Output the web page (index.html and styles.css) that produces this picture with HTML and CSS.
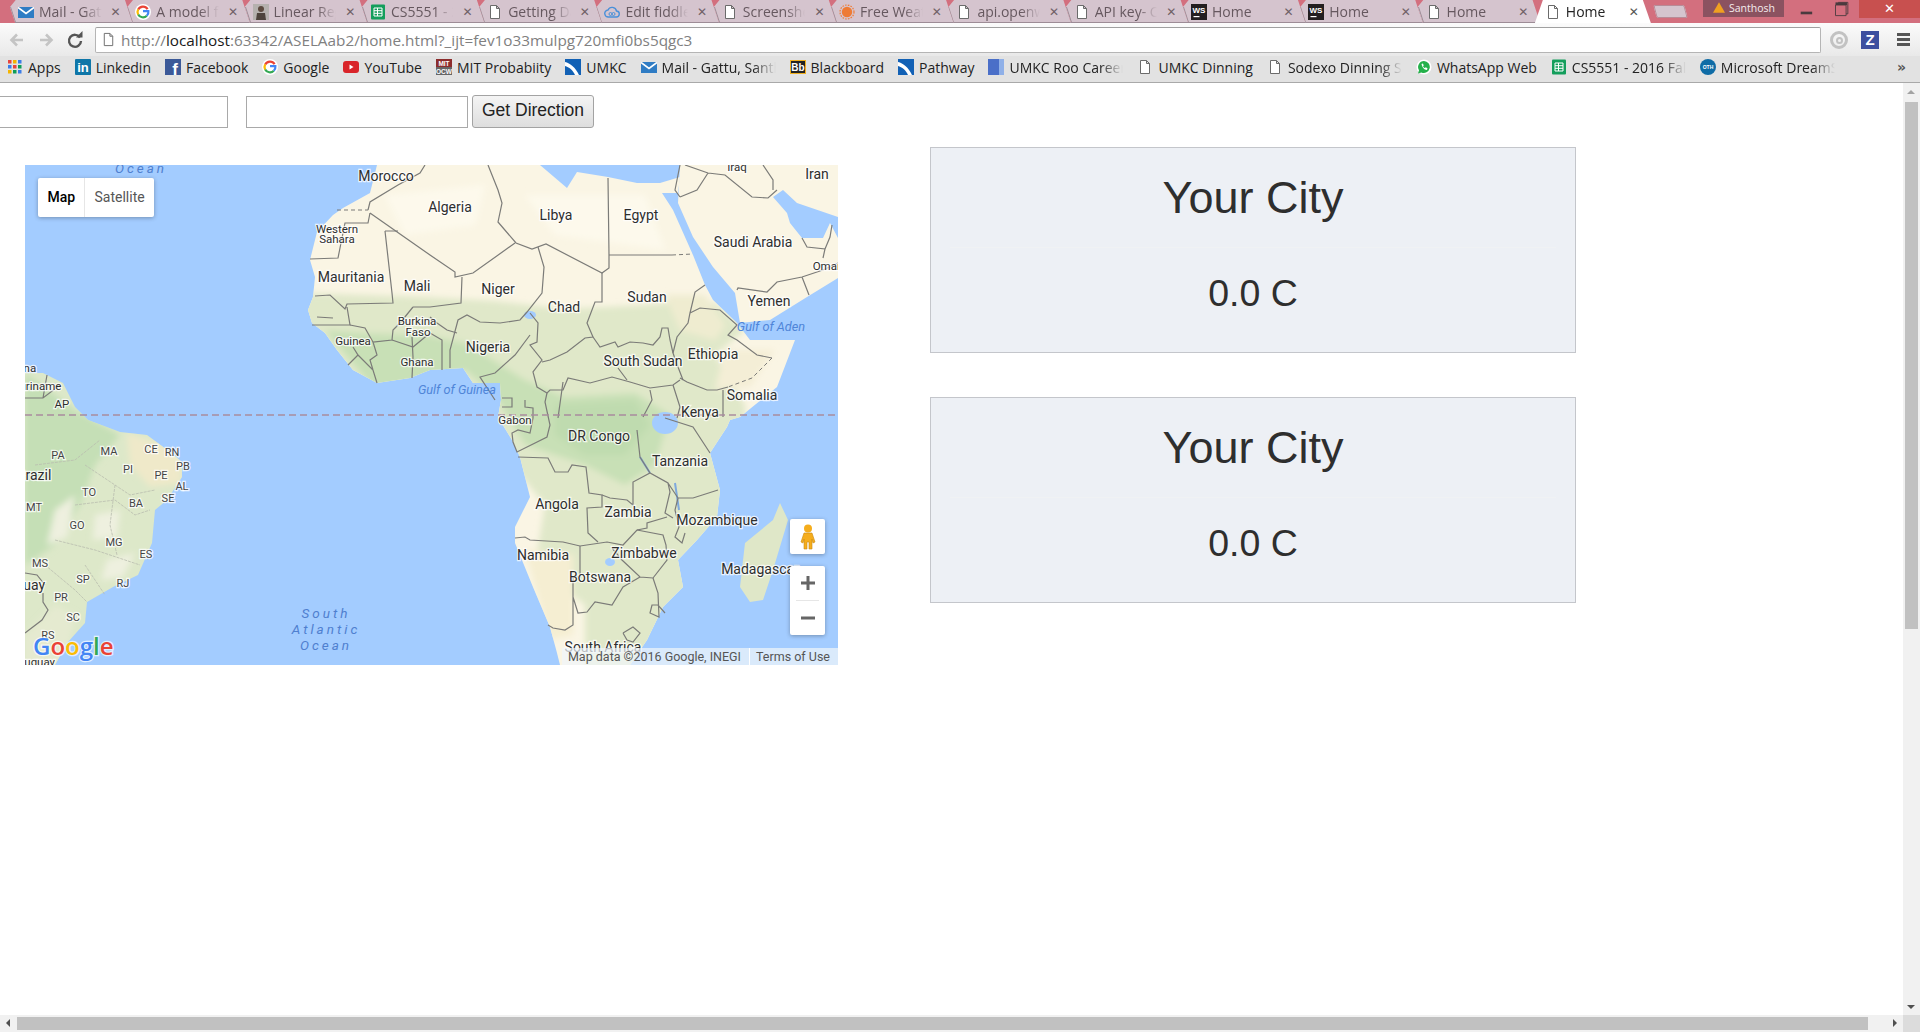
FILE: index.html

```html
<!DOCTYPE html>
<html lang="en">
<head>
    <meta charset="UTF-8">
    <title>Home</title>
    <link rel="stylesheet" href="styles.css">
</head>
<body>
    <svg class="icon-defs" width="0" height="0">
        <symbol id="doc" viewBox="0 0 16 16"><path d="M3.500 1.500h6l3 3v10h-9z M9.500 1.500v3h3" fill="#fff" stroke="#6b6b6b" stroke-width="1"/></symbol>
        <symbol id="mail" viewBox="0 0 16 16"><rect y="3" width="16" height="11" fill="#2f7cc4"/><path d="M0 3.500l8 6 8-6" fill="none" stroke="#fff" stroke-width="1.600"/></symbol>
        <symbol id="sheet" viewBox="0 0 16 16"><rect x="1" y="0.500" width="14" height="15" rx="1" fill="#149e5c"/><path d="M4 4h8v8H4z M4 6.700h8 M4 9.300h8 M7.500 4v8" fill="none" stroke="#fff" stroke-width="1"/></symbol>
        <symbol id="goog" viewBox="0 0 16 16"><circle cx="8" cy="8" r="8" fill="#fff"/><path d="M12.600 5.200A5.400 5.400 0 0 0 3.200 5.600" fill="none" stroke="#ea4335" stroke-width="2.200"/><path d="M3.200 5.400a5.400 5.400 0 0 0 0 5.200" fill="none" stroke="#fbbc05" stroke-width="2.200"/><path d="M3.200 10.400a5.400 5.400 0 0 0 8.600 1.400" fill="none" stroke="#34a853" stroke-width="2.200"/><path d="M8 7.200h5.400a5.400 5.400 0 0 1-1.600 4.600" fill="none" stroke="#4285f4" stroke-width="2.200"/></symbol>
        <symbol id="umkc" viewBox="0 0 16 16"><rect width="16" height="16" fill="#1261b5"/><path d="M0 3c5 1 11 6 14 13h-4C8 11 4 8 0 7z" fill="#fff"/></symbol>
        <symbol id="wstorm" viewBox="0 0 16 16"><rect width="16" height="16" fill="#231f20"/><text x="8" y="9" class="ws-text">WS</text><rect x="2.500" y="12" width="6" height="1.200" fill="#fff"/></symbol>
    </svg>

    <div class="browser">
        <div class="tabstrip">
            <div class="tab"><svg class="favicon"><use href="#mail"/></svg><span class="tab-title">Mail - Gattu</span><span class="tab-x">&#10005;</span></div>
            <div class="tab"><svg class="favicon"><use href="#goog"/></svg><span class="tab-title">A model for</span><span class="tab-x">&#10005;</span></div>
            <div class="tab">
                <svg class="favicon" viewBox="0 0 16 16"><rect width="16" height="16" fill="#b5b1ae"/><circle cx="8" cy="5" r="3" fill="#5c4a3f"/><path d="M3 16l1-7h8l1 7z" fill="#4d433c"/></svg>
                <span class="tab-title">Linear Regr</span><span class="tab-x">&#10005;</span>
            </div>
            <div class="tab"><svg class="favicon"><use href="#sheet"/></svg><span class="tab-title">CS5551 - 2016</span><span class="tab-x">&#10005;</span></div>
            <div class="tab"><svg class="favicon"><use href="#doc"/></svg><span class="tab-title">Getting Data</span><span class="tab-x">&#10005;</span></div>
            <div class="tab">
                <svg class="favicon" viewBox="0 0 16 16"><path d="M4.500 13a3.500 3.500 0 0 1-.5-7 4.500 4.500 0 0 1 8.500 1 3 3 0 0 1-.5 6z" fill="none" stroke="#4a90d9" stroke-width="1.400"/><circle cx="6.500" cy="10" r="1.500" fill="none" stroke="#4a90d9"/><circle cx="9.500" cy="10" r="1.500" fill="none" stroke="#4a90d9"/></svg>
                <span class="tab-title">Edit fiddle -</span><span class="tab-x">&#10005;</span>
            </div>
            <div class="tab"><svg class="favicon"><use href="#doc"/></svg><span class="tab-title">Screenshot</span><span class="tab-x">&#10005;</span></div>
            <div class="tab">
                <svg class="favicon" viewBox="0 0 16 16"><circle cx="8" cy="8" r="5.200" fill="#ee7b35"/><circle cx="8" cy="8" r="7" fill="none" stroke="#ee7b35" stroke-width="1.200" stroke-dasharray="1.600 1.200"/></svg>
                <span class="tab-title">Free Weather</span><span class="tab-x">&#10005;</span>
            </div>
            <div class="tab"><svg class="favicon"><use href="#doc"/></svg><span class="tab-title">api.openweather</span><span class="tab-x">&#10005;</span></div>
            <div class="tab"><svg class="favicon"><use href="#doc"/></svg><span class="tab-title">API key- Open</span><span class="tab-x">&#10005;</span></div>
            <div class="tab"><svg class="favicon"><use href="#wstorm"/></svg><span class="tab-title">Home</span><span class="tab-x">&#10005;</span></div>
            <div class="tab"><svg class="favicon"><use href="#wstorm"/></svg><span class="tab-title">Home</span><span class="tab-x">&#10005;</span></div>
            <div class="tab"><svg class="favicon"><use href="#doc"/></svg><span class="tab-title">Home</span><span class="tab-x">&#10005;</span></div>
            <div class="tab tab-active"><svg class="favicon"><use href="#doc"/></svg><span class="tab-title">Home</span><span class="tab-x">&#10005;</span></div>
            <div class="new-tab"></div>
            <div class="strip-space"></div>
            <div class="profile">
                <svg class="warn" viewBox="0 0 14 12"><path d="M7 0l7 12H0z" fill="#f0a020"/></svg>
                <span>Santhosh</span>
            </div>
            <div class="win-btn">
                <svg viewBox="0 0 34 18" width="34" height="18"><rect x="11" y="12" width="13" height="3" fill="#4a3a3e"/></svg>
            </div>
            <div class="win-btn">
                <svg viewBox="0 0 34 18" width="34" height="18"><path d="M8.500 1.500h13v3h-13z" fill="#4a3a3e"/><path d="M11.500 1.500h11v13h-2M8.500 4.500h12v12h-12z" fill="none" stroke="#4a3a3e"/></svg>
            </div>
            <div class="win-close">&#10005;</div>
        </div>

        <div class="toolbar">
            <svg class="nav-icon" viewBox="0 0 18 18"><path d="M15 9H4M9 3.500L3.500 9 9 14.500" fill="none" stroke="#c4c4c4" stroke-width="2.600"/></svg>
            <svg class="nav-icon" viewBox="0 0 18 18"><path d="M3 9h11M9 3.500L14.500 9 9 14.500" fill="none" stroke="#c4c4c4" stroke-width="2.600"/></svg>
            <svg class="nav-icon" viewBox="0 0 18 18"><path d="M14 6.500A6 6 0 1 0 15 10" fill="none" stroke="#555" stroke-width="2.400"/><path d="M10 6.500h6.500V0z" fill="#555"/></svg>
            <div class="urlbar">
                <svg class="url-page"><use href="#doc"/></svg>
                <span class="url-text">http://<b>localhost</b>:63342/ASELAab2/home.html?_ijt=fev1o33mulpg720mfi0bs5qgc3</span>
            </div>
            <svg class="ext-icon" viewBox="0 0 20 20"><circle cx="10" cy="10" r="7.500" fill="none" stroke="#c2c2c2" stroke-width="3"/><circle cx="10.500" cy="10.500" r="2.500" fill="none" stroke="#c2c2c2" stroke-width="2"/></svg>
            <div class="ext-z">Z</div>
            <div class="menu-icon"><i></i><i></i><i></i></div>
        </div>

        <div class="bookmarks">
            <div class="bm">
                <svg class="bm-icon" viewBox="0 0 16 16"><rect x="1" y="1" width="3.500" height="3.500" fill="#e8453c"/><rect x="6" y="1" width="3.500" height="3.500" fill="#f4b400"/><rect x="11" y="1" width="3.500" height="3.500" fill="#3a7de8"/><rect x="1" y="6" width="3.500" height="3.500" fill="#3a7de8"/><rect x="6" y="6" width="3.500" height="3.500" fill="#e8453c"/><rect x="11" y="6" width="3.500" height="3.500" fill="#0f9d58"/><rect x="1" y="11" width="3.500" height="3.500" fill="#f4b400"/><rect x="6" y="11" width="3.500" height="3.500" fill="#0f9d58"/><rect x="11" y="11" width="3.500" height="3.500" fill="#3a7de8"/></svg>
                <span>Apps</span>
            </div>
            <div class="bm"><svg class="bm-icon" viewBox="0 0 16 16"><rect width="16" height="16" rx="1" fill="#0e76a8"/><text x="8" y="13" class="in-text">in</text></svg><span>Linkedin</span></div>
            <div class="bm"><svg class="bm-icon" viewBox="0 0 16 16"><rect width="16" height="16" fill="#3b5998"/><text x="10" y="15.500" class="fb-text">f</text></svg><span>Facebook</span></div>
            <div class="bm"><svg class="bm-icon"><use href="#goog"/></svg><span>Google</span></div>
            <div class="bm"><svg class="bm-icon" viewBox="0 0 16 16"><rect y="2" width="16" height="12" rx="3" fill="#d9252a"/><path d="M6.500 5.500v5l4-2.500z" fill="#fff"/></svg><span>YouTube</span></div>
            <div class="bm"><svg class="bm-icon" viewBox="0 0 16 16"><rect width="16" height="8" fill="#8c2d2d"/><rect y="8" width="16" height="8" fill="#666"/><text x="8" y="6.500" class="mit-text">MIT</text><text x="8" y="14.500" class="mit-text">OCW</text></svg><span>MIT Probabiity</span></div>
            <div class="bm"><svg class="bm-icon"><use href="#umkc"/></svg><span>UMKC</span></div>
            <div class="bm"><svg class="bm-icon"><use href="#mail"/></svg><span class="bm-fade">Mail - Gattu, Santhosh</span></div>
            <div class="bm"><svg class="bm-icon" viewBox="0 0 16 16"><rect width="16" height="14" y="1" fill="#f0b020"/><rect x="1" y="2" width="14" height="12" fill="#222"/><text x="8" y="12" class="bb-text">Bb</text></svg><span>Blackboard</span></div>
            <div class="bm"><svg class="bm-icon"><use href="#umkc"/></svg><span>Pathway</span></div>
            <div class="bm"><svg class="bm-icon" viewBox="0 0 16 16"><rect width="16" height="16" fill="#4a6fc8"/><rect x="11" width="5" height="16" fill="#8fb0e8"/></svg><span class="bm-fade">UMKC Roo Careers</span></div>
            <div class="bm"><svg class="bm-icon"><use href="#doc"/></svg><span>UMKC Dinning</span></div>
            <div class="bm"><svg class="bm-icon"><use href="#doc"/></svg><span class="bm-fade">Sodexo Dinning Services</span></div>
            <div class="bm"><svg class="bm-icon" viewBox="0 0 16 16"><circle cx="8" cy="8" r="7.500" fill="#fff"/><path d="M8 2a6 6 0 0 0-5 9.200L2 14.500l3.400-1A6 6 0 1 0 8 2z" fill="#25b14b"/><path d="M5.500 5c1 4 2.500 5.500 5.500 6l.5-1.700-1.800-1-.7.800C7.800 8.600 7.300 8 7 7l.8-.6-.9-1.800z" fill="#fff"/></svg><span>WhatsApp Web</span></div>
            <div class="bm"><svg class="bm-icon"><use href="#sheet"/></svg><span class="bm-fade">CS5551 - 2016 Fall</span></div>
            <div class="bm"><svg class="bm-icon" viewBox="0 0 16 16"><circle cx="8" cy="8" r="8" fill="#0f6ca6"/><text x="8" y="10" class="dm-text">OTH</text></svg><span class="bm-fade">Microsoft DreamSpark</span></div>
            <div class="bm-more">&raquo;</div>
        </div>

        <div class="viewport">
            <main class="page">
                <div class="route-form">
                    <input type="text" class="route-start">
                    <input type="text" class="route-end">
                    <button type="button">Get Direction</button>
                </div>

                <div class="content">
                    <div class="map">
                        <svg class="map-svg" viewBox="0 0 813 500" width="813" height="500">
                            <defs>
                                <clipPath id="africaClip"><path id="africaShape" d="M352 0L345 28L318 43L308 50L292 67L285 95L290 112L288 132L283 145L287 158L300 168L312 185L328 205L352 218L385 213L405 205L438 203L448 218L475 218L476 235L473 252L487 275L495 292L505 332L490 362L490 378L508 422L525 462L532 488L535 500L605 500L622 475L638 442L658 422L653 395L672 375L692 352L695 325L685 288L702 262L705 255L715 252L752 222L770 175L725 175L712 158L688 135L680 120L668 90L648 45L637 28L653 28L655 12L635 18L612 18L583 12L552 7L542 23L515 0Z"/></clipPath>
                                <clipPath id="brazilClip"><path d="M0 208L18 208L38 218L50 242L63 255L95 267L122 270L145 287L157 297L157 312L142 335L130 345L127 378L113 410L88 422L62 437L60 458L42 478L30 500L0 500Z"/></clipPath>
                                <filter id="soft"><feGaussianBlur stdDeviation="3"/></filter>
                            </defs>
                            <rect width="813" height="500" fill="#a3ccff"/>

                            <use href="#africaShape" fill="#faf5e4"/>
                            <path d="M655 0L813 0L813 113L782 132L745 155L715 158L710 128L688 102L668 72L653 38Z" fill="#faf5e4"/>
                            <path d="M748 32L758 25L772 38L813 52L813 73L805 58L798 73L777 73L765 58L762 48Z" fill="#a3ccff"/>

                            <g clip-path="url(#africaClip)">
                                <g filter="url(#soft)">
                                    <path d="M270 128L340 130L400 132L470 136L540 144L620 140L660 136L690 138L720 165L690 190L720 240L720 300L720 510L560 510L560 440L510 400L520 340L470 280L460 225L270 225Z" fill="#e0e8c9"/>
                                    <path d="M300 165L340 168L400 170L440 178L460 190L500 215L540 232L610 228L645 250L630 300L600 320L560 300L500 280L470 230L440 205L350 225Z" fill="#c8e0b6"/>
                                    <path d="M530 240L610 235L625 260L600 290L560 290L530 270Z" fill="#bfdbaf"/>
                                    <path d="M500 385L548 390L548 470L525 475Z" fill="#f5eed2"/>
                                    <path d="M640 130L680 130L700 160L690 175L655 165Z" fill="#efecd0"/>
                                    <path d="M700 185L750 185L725 222L690 225Z" fill="#f4eed6"/>
                                    <path d="M360 30L460 20L450 60L380 70Z M500 30L620 30L640 85L530 70Z" fill="#fdf9ec"/>
                                </g>
                            </g>

                            <g clip-path="url(#brazilClip)">
                                <rect y="200" width="170" height="300" fill="#dde8c9"/>
                                <g filter="url(#soft)">
                                    <path d="M0 208L50 245L95 270L70 300L55 340L30 380L0 400Z" fill="#c5dfb6"/>
                                    <path d="M102 268L155 285L157 318L125 322L105 300Z" fill="#efe9c9"/>
                                    <path d="M0 470L30 440L50 450L40 500L0 500Z" fill="#e5ead0"/>
                                    <path d="M30 345L50 330L42 372L22 380Z M70 350L95 345L92 372L68 375Z M82 395L110 388L98 412L76 415Z" fill="#eef0df"/>
                                </g>
                            </g>
                            <path d="M755 338L763 355L748 405L738 435L725 437L715 422L720 378L748 355Z" fill="#dfe7c8"/>

                            <ellipse cx="640" cy="258" rx="13" ry="11" fill="#a3ccff"/>
                            <ellipse cx="505" cy="150" rx="6" ry="4" fill="#a3ccff"/>
                            <ellipse cx="585" cy="397" rx="5" ry="4" fill="#a3ccff"/>
                            <path class="lake" d="M615 292L625 308M650 318L654 345"/>

                            <g class="borders">
                                <path d="M463 0L473 25L477 38L473 57L491 78L507 84L521 79L577 108L584 103L584 90L583 13"/>
                                <path d="M584 90L647 90M577 108L577 137L570 137L562 158L568 172L560 173L542 187L525 195L517 197"/>
                                <path d="M513 82L519 102L517 128L502 147L495 155L475 158L455 157L442 150L433 155L425 185L425 203"/>
                                <path d="M345 48L405 90L430 107L430 112L448 108L490 78M437 112L436 138L405 142L388 142"/>
                                <path d="M505 148L513 158L512 177L505 180L517 195L508 207L512 222L522 228L525 225L538 225L543 213L565 218L587 212L605 217L625 223L648 220L655 215"/>
                                <path d="M505 170L490 190L470 208L455 212L470 235"/>
                                <path d="M568 172L575 182L590 177L593 182L605 177L618 178L628 180L635 172L637 163L643 163L645 175L648 188L653 202L658 215"/>
                                <path d="M680 120L670 127L665 148L663 158L652 172L648 188M665 148L675 143L695 145L712 160L703 170L712 175L732 190L747 193"/>
                                <path d="M703 222L692 225L682 225L662 217L655 213M593 203L602 215M648 220L655 242L652 253M625 225L627 235L618 252M698 225L698 252"/>
                                <path d="M683 8L700 10L727 32L743 33L752 25M683 8L672 25L655 32M738 0L748 15L748 25M655 0L650 25L655 32M683 8L660 0"/>
                                <path d="M712 125L713 123L742 127L752 117L777 112L798 105L813 98M777 112L784 130M777 73L782 82L800 84L798 93M800 84L805 72L807 60"/>
                                <path d="M343 45L345 37L373 20L395 8L400 0M345 48L343 58L320 58L315 83L313 93L285 94"/>
                                <path d="M360 66L373 66M360 66L367 128L368 138L322 139L320 144L305 130L290 131M322 142L325 160L308 160L287 160M292 152L308 153"/>
                                <path d="M325 160L340 163L348 177L367 175L368 165L375 158L388 142M333 190L323 200M328 182L333 190L348 205L352 218M348 177L352 190L345 195L348 205"/>
                                <path d="M387 172L388 192L387 213M367 175L388 182L405 168L417 175L417 205M405 152L412 158L422 165L432 168"/>
                                <path d="M477 233L487 233L487 242L477 242M500 235L500 242L508 243L508 253L505 268L493 265L487 268L488 277L492 287L522 272L525 260L520 237L522 228M538 217L533 253"/>
                                <path d="M493 292L523 293L530 307L543 307L547 300L561 302L564 328L577 330L577 342L562 343L563 368L573 377M490 373L500 372L505 375L538 377L555 381L582 377L598 380L612 365L622 363L622 358L642 352"/>
                                <path d="M577 330L585 333L602 335L608 340L608 317L625 308L643 318L645 327L640 348L648 353M612 265L615 292L625 308M643 318L653 333L668 333L693 325M653 333L650 345L654 362L650 372L657 378L660 368"/>
                                <path d="M612 365L638 370L641 380L642 395L628 413L615 412L597 395L587 383M555 381L555 412L548 412L548 460L540 465L528 463L523 460M548 432L553 448L562 447L570 437L587 440L598 422L615 412"/>
                                <path d="M628 413L633 428L634 452L625 448L627 440L633 440L640 448M598 468L608 462L615 468L608 477L602 475L598 468M640 253L668 262L685 288"/>
                                <path d="M0 233L18 233L35 220M18 233L22 210M18 428L18 437L23 445L17 455L0 468M0 408L12 410L20 420"/>
                            </g>
                            <g class="borders-dash">
                                <path d="M312 45L343 45M647 90L668 89M747 193L727 213L703 222"/>
                            </g>
                            <path class="states" d="M10 300L50 295L75 275M60 300L90 320L105 330L130 325M50 340L90 335L110 350L125 345M30 375L70 385L100 395L115 400M60 400L80 430M20 400L50 425L62 437M90 320L85 360L92 390"/>
                            <path class="equator" d="M0 250H813"/>

                            <text x="116" y="3" class="sea">Ocean</text>
                            <text x="301" y="448" class="sea">South</text>
                            <text x="301" y="464" class="sea">Atlantic</text>
                            <text x="301" y="480" class="sea">Ocean</text>
                            <text x="432" y="224" class="gulf">Gulf of Guinea</text>
                            <text x="746" y="161" class="gulf">Gulf of Aden</text>

                            <text x="361" y="11" class="lbl">Morocco</text>
                            <text x="425" y="42" class="lbl">Algeria</text>
                            <text x="531" y="50" class="lbl">Libya</text>
                            <text x="616" y="50" class="lbl">Egypt</text>
                            <text x="712" y="2" class="lbl sm">Iraq</text>
                            <text x="792" y="9" class="lbl">Iran</text>
                            <text x="728" y="77" class="lbl">Saudi Arabia</text>
                            <text x="803" y="101" class="lbl sm">Oman</text>
                            <text x="744" y="136" class="lbl">Yemen</text>
                            <text x="312" y="64" class="lbl sm">Western</text>
                            <text x="312" y="74" class="lbl sm">Sahara</text>
                            <text x="326" y="112" class="lbl">Mauritania</text>
                            <text x="392" y="121" class="lbl">Mali</text>
                            <text x="473" y="124" class="lbl">Niger</text>
                            <text x="539" y="142" class="lbl">Chad</text>
                            <text x="622" y="132" class="lbl">Sudan</text>
                            <text x="392" y="156" class="lbl sm">Burkina</text>
                            <text x="393" y="167" class="lbl sm">Faso</text>
                            <text x="328" y="176" class="lbl sm">Guinea</text>
                            <text x="392" y="197" class="lbl sm">Ghana</text>
                            <text x="463" y="182" class="lbl">Nigeria</text>
                            <text x="618" y="196" class="lbl">South Sudan</text>
                            <text x="688" y="189" class="lbl">Ethiopia</text>
                            <text x="727" y="230" class="lbl">Somalia</text>
                            <text x="675" y="247" class="lbl">Kenya</text>
                            <text x="490" y="255" class="lbl sm">Gabon</text>
                            <text x="574" y="271" class="lbl">DR Congo</text>
                            <text x="655" y="296" class="lbl">Tanzania</text>
                            <text x="532" y="339" class="lbl">Angola</text>
                            <text x="603" y="347" class="lbl">Zambia</text>
                            <text x="692" y="355" class="lbl">Mozambique</text>
                            <text x="518" y="390" class="lbl">Namibia</text>
                            <text x="619" y="388" class="lbl">Zimbabwe</text>
                            <text x="575" y="412" class="lbl">Botswana</text>
                            <text x="735" y="404" class="lbl">Madagascar</text>
                            <text x="578" y="482" class="lbl">South Africa</text>

                            <text x="-8" y="203" class="lbl sm">Guyana</text>
                            <text x="12" y="221" class="lbl sm">Suriname</text>
                            <text x="37" y="239" class="lbl sm">AP</text>
                            <text x="33" y="290" class="lbl st">PA</text>
                            <text x="84" y="286" class="lbl st">MA</text>
                            <text x="126" y="284" class="lbl st">CE</text>
                            <text x="147" y="287" class="lbl st">RN</text>
                            <text x="158" y="301" class="lbl st">PB</text>
                            <text x="103" y="304" class="lbl st">PI</text>
                            <text x="136" y="310" class="lbl st">PE</text>
                            <text x="157" y="321" class="lbl st">AL</text>
                            <text x="143" y="333" class="lbl st">SE</text>
                            <text x="111" y="338" class="lbl st">BA</text>
                            <text x="64" y="327" class="lbl st">TO</text>
                            <text x="9" y="342" class="lbl st">MT</text>
                            <text x="52" y="360" class="lbl st">GO</text>
                            <text x="89" y="377" class="lbl st">MG</text>
                            <text x="121" y="389" class="lbl st">ES</text>
                            <text x="15" y="398" class="lbl st">MS</text>
                            <text x="58" y="414" class="lbl st">SP</text>
                            <text x="98" y="418" class="lbl st">RJ</text>
                            <text x="36" y="432" class="lbl st">PR</text>
                            <text x="48" y="452" class="lbl st">SC</text>
                            <text x="23" y="470" class="lbl st">RS</text>
                            <text x="9" y="310" class="lbl">Brazil</text>
                            <text x="-9" y="420" class="lbl">Paraguay</text>
                            <text x="9" y="497" class="lbl sm">Uruguay</text>

                            <text x="8" y="490" class="logo"><tspan fill="#4285f4">G</tspan><tspan fill="#ea4335">o</tspan><tspan fill="#fbbc05">o</tspan><tspan fill="#4285f4">g</tspan><tspan fill="#34a853">l</tspan><tspan fill="#ea4335">e</tspan></text>
                        </svg>

                        <div class="map-type">
                            <div class="map-type-btn map-type-on">Map</div>
                            <div class="map-type-btn">Satellite</div>
                        </div>

                        <div class="pegman">
                            <svg viewBox="0 0 16 26" width="16" height="26"><circle cx="8" cy="4.500" r="4" fill="#f5ad1c"/><path d="M4 9h8l3 9-2 1-1-4v10H9v-7H7v7H4V15l-1 4-2-1z" fill="#f5ad1c" stroke="#c98a10" stroke-width=".6"/></svg>
                        </div>
                        <div class="zoom-ctl">
                            <div class="zoom-btn"><svg viewBox="0 0 14 14" width="14" height="14"><path d="M5.500 0h3v5.500H14v3H8.500V14h-3V8.500H0v-3h5.500z" fill="#666"/></svg></div>
                            <div class="zoom-line"></div>
                            <div class="zoom-btn"><svg viewBox="0 0 14 14" width="14" height="14"><rect y="5.500" width="14" height="3" fill="#666"/></svg></div>
                        </div>
                        <div class="map-credit">
                            <span>Map data &copy;2016 Google, INEGI</span>
                            <span class="credit-terms">Terms of Use</span>
                        </div>
                    </div>

                    <div class="weather-cards">
                        <div class="weather-card">
                            <h2>Your City</h2>
                            <hr>
                            <p>0.0 C</p>
                        </div>
                        <div class="weather-card">
                            <h2>Your City</h2>
                            <hr>
                            <p>0.0 C</p>
                        </div>
                    </div>
                </div>
            </main>

            <div class="vscroll">
                <div class="arrow-up"></div>
                <div class="vthumb"></div>
                <div class="arrow-down"></div>
            </div>
        </div>

        <div class="hscroll">
            <div class="arrow-left"></div>
            <div class="hthumb"></div>
            <div class="arrow-right"></div>
            <div class="scroll-corner"></div>
        </div>
    </div>
</body>
</html>
```

FILE: styles.css

```css
html, body {
    margin: 0;
    height: 100%;
    overflow: hidden;
    background: #fff;
}

.icon-defs {
    position: absolute;
}

.browser {
    display: flex;
    flex-direction: column;
    height: 1032px;
    font-family: "Open Sans", sans-serif;
}

/* tab strip */
.tabstrip {
    display: flex;
    height: 23px;
    padding-left: 10px;
    background: #d36f7e;
}

/* small pink notch at the top, then a slanted hairline between tabs */
.tab {
    position: relative;
    width: 122.6px;
    margin-right: -5.3px;
    flex: none;
    display: flex;
    align-items: center;
    box-sizing: border-box;
    padding: 0 10px 0 8px;
    background: #d5c4ce;
    box-shadow: inset 0 -1px #9d8c96;
    clip-path: polygon(5.7px 0, calc(100% - 7.6px) 0, calc(100% - 5.3px) 7px, 100% 100%, 5.3px 100%, 0 7px);
    color: #66585f;
    font-size: 14px;
}

.tab::after {
    content: "";
    position: absolute;
    top: 7px;
    left: 0;
    width: 1px;
    height: 16px;
    background: #9d8c96;
    transform-origin: top left;
    transform: skewX(18deg);
}

.tab-active {
    z-index: 1;
    width: 116px;
    margin-right: 0;
    padding-left: 10px;
    background: #fff;
    box-shadow: none;
    clip-path: polygon(8px 0, calc(100% - 8px) 0, 100% 100%, 0 100%);
    color: #222;
}

.tab-active::after {
    display: none;
}

.favicon {
    width: 16px;
    height: 16px;
    flex: none;
    margin-right: 5px;
}

.tab-title {
    flex: 1;
    overflow: hidden;
    white-space: nowrap;
    -webkit-mask-image: linear-gradient(to right, #000 70%, transparent);
    mask-image: linear-gradient(to right, #000 70%, transparent);
}

.tab-x {
    flex: none;
    width: 12px;
    margin-left: 9px;
    color: #6f6066;
    font-size: 12px;
    font-weight: bold;
    font-family: "DejaVu Sans", sans-serif;
}

.tab-active .tab-x {
    color: #555;
}

.ws-text {
    fill: #fff;
    font: bold 8px "Liberation Sans", sans-serif;
    text-anchor: middle;
}

.new-tab {
    width: 31px;
    height: 13px;
    margin: 5px 0 0 4px;
    background: #d5c4ce;
    border-radius: 2px;
    transform: skewX(15deg);
    box-shadow: inset 0 0 0 1px #b88b97;
}

.strip-space {
    flex: 1;
}

.profile {
    display: flex;
    align-items: flex-start;
    gap: 4px;
    width: 81px;
    height: 17px;
    box-sizing: border-box;
    padding: 2px 0 0 10px;
    background: #8b5260;
    color: #f4ecee;
    font-size: 10.5px;
    line-height: 12px;
}

.warn {
    width: 12px;
    height: 11px;
    flex: none;
}

.win-btn {
    box-sizing: border-box;
    width: 37px;
    height: 18px;
    padding-left: 7px;
    display: flex;
    justify-content: center;
}

.win-close {
    width: 61px;
    height: 18px;
    margin-left: 1px;
    background: #c8504f;
    color: #fff;
    font: bold 13px/18px "DejaVu Sans", sans-serif;
    text-align: center;
}

/* toolbar */
.toolbar {
    display: flex;
    align-items: center;
    height: 33px;
    padding-left: 8px;
    background: linear-gradient(#fbfbfb, #e9e9e9);
}

.nav-icon {
    width: 18px;
    height: 18px;
    margin-right: 11px;
    flex: none;
}

.urlbar {
    display: flex;
    align-items: center;
    box-sizing: border-box;
    width: 1726px;
    height: 26px;
    padding-left: 5px;
    background: #fff;
    border: 1px solid #b5b5b5;
    border-top-color: #a0a0a0;
    border-radius: 2px;
}

.url-page {
    width: 15px;
    height: 15px;
    margin-right: 5px;
}

.url-text {
    color: #808080;
    font-size: 15.3px;
    white-space: nowrap;
}

.url-text b {
    color: #1a1a1a;
    font-weight: normal;
}

.ext-icon {
    width: 20px;
    height: 20px;
    margin-left: 8px;
}

.ext-z {
    width: 18px;
    height: 18px;
    margin-left: 12px;
    background: #3d4f9f;
    color: #fff;
    font: bold 15px/18px "Liberation Sans", sans-serif;
    text-align: center;
}

.menu-icon {
    display: flex;
    flex-direction: column;
    gap: 2px;
    margin-left: 18px;
}

.menu-icon i {
    display: block;
    width: 13px;
    height: 3px;
    background: #555;
}

/* bookmarks bar */
.bookmarks {
    display: flex;
    align-items: center;
    gap: 14px;
    box-sizing: border-box;
    height: 27px;
    padding: 0 0 4px 7px;
    background: #e2e2e2;
    border-bottom: 1px solid #a9a9a9;
    color: #222;
    font-size: 14px;
    white-space: nowrap;
}

.bm {
    display: flex;
    align-items: center;
    gap: 5px;
    flex: none;
}

.bm-icon {
    width: 16px;
    height: 16px;
    flex: none;
}

.bm-fade {
    width: 114px;
    overflow: hidden;
    -webkit-mask-image: linear-gradient(to right, #000 80%, transparent);
    mask-image: linear-gradient(to right, #000 80%, transparent);
}

.in-text {
    fill: #fff;
    font: bold 13px "Liberation Sans", sans-serif;
    text-anchor: middle;
}

.fb-text {
    fill: #fff;
    font: bold 17px "Liberation Sans", sans-serif;
    text-anchor: middle;
}

.mit-text {
    fill: #fff;
    font: bold 6.5px "Liberation Sans", sans-serif;
    text-anchor: middle;
}

.bb-text {
    fill: #fff;
    font: bold 10px "Liberation Sans", sans-serif;
    text-anchor: middle;
}

.dm-text {
    fill: #fff;
    font: bold 5px "Liberation Sans", sans-serif;
    text-anchor: middle;
}

.bm-more {
    position: absolute;
    left: 1897px;
    color: #555;
    font: bold 14px "DejaVu Sans", sans-serif;
}

/* page */
.viewport {
    display: flex;
    flex: 1;
    min-height: 0;
}

.page {
    flex: 1;
    min-width: 0;
    overflow: hidden;
    padding-top: 12px;
}

.route-form {
    display: flex;
    align-items: center;
    height: 33px;
}

.route-form input {
    box-sizing: border-box;
    height: 32px;
    background: #fff;
    border: 1px solid #a9a9a9;
    padding: 1px;
}

.route-start {
    width: 238px;
    margin-left: -10px;
}

.route-end {
    width: 222px;
    margin-left: 18px;
}

.route-form button {
    box-sizing: border-box;
    width: 122px;
    height: 33px;
    margin-left: 4px;
    padding: 0 0 2px;
    background: linear-gradient(#f4f4f4, #dedede);
    border: 1px solid #a3a3a3;
    border-radius: 3px;
    color: #222;
    font: 17.5px "Liberation Sans", Arial, sans-serif;
}

.content {
    display: flex;
    align-items: flex-start;
    margin: 19px 0 0 25px;
}

.map {
    position: relative;
    flex: none;
    width: 813px;
    height: 500px;
    margin-top: 18px;
    overflow: hidden;
    font-family: Roboto, sans-serif;
}

.map-svg {
    display: block;
    font-family: Roboto, sans-serif;
}

.borders path {
    fill: none;
    stroke: #7b7b78;
    stroke-width: 1.2;
}

.borders-dash path {
    fill: none;
    stroke: #7b7b78;
    stroke-width: 1;
    stroke-dasharray: 4 3;
}

.states {
    fill: none;
    stroke: #b9bcae;
    stroke-width: .8;
    stroke-dasharray: 3 1;
}

.lake {
    fill: none;
    stroke: #7fa9dd;
    stroke-width: 2;
}

.equator {
    fill: none;
    stroke: #a98c9e;
    stroke-width: 1.3;
    stroke-dasharray: 7 4;
}

.lbl {
    fill: #2e2e2e;
    stroke: rgba(255, 255, 255, .75);
    stroke-width: 2.5px;
    paint-order: stroke;
    font-size: 14px;
    font-weight: 400;
    text-anchor: middle;
    dominant-baseline: central;
}

.lbl.sm {
    font-size: 11.5px;
}

.lbl.st {
    fill: #444;
    font-size: 11px;
}

.sea {
    fill: #4f7fcf;
    font-size: 13.5px;
    font-style: italic;
    letter-spacing: 3px;
    text-anchor: middle;
    dominant-baseline: central;
}

.gulf {
    fill: #4f85d8;
    font-size: 12.7px;
    font-style: italic;
    text-anchor: middle;
    dominant-baseline: central;
}

.logo {
    stroke: rgba(255, 255, 255, .7);
    stroke-width: 2.5px;
    paint-order: stroke;
    font: 600 24px "Open Sans", sans-serif;
}

.map-type {
    position: absolute;
    top: 13px;
    left: 13px;
    display: flex;
    height: 39px;
    background: #fff;
    border-radius: 2px;
    box-shadow: 0 1px 4px rgba(0, 0, 0, .3);
}

.map-type-btn {
    padding: 0 9.5px;
    color: #565656;
    font-size: 14px;
    line-height: 39px;
}

.map-type-on {
    width: 27px;
    color: #000;
    font-weight: 500;
    border-right: 1px solid #e6e6e6;
}

.pegman {
    position: absolute;
    left: 765px;
    top: 354px;
    display: flex;
    align-items: center;
    justify-content: center;
    width: 35px;
    height: 35px;
    background: #fff;
    border-radius: 2px;
    box-shadow: 0 1px 4px rgba(0, 0, 0, .3);
}

.zoom-ctl {
    position: absolute;
    left: 765px;
    top: 401px;
    width: 35px;
    height: 69px;
    background: #fff;
    border-radius: 2px;
    box-shadow: 0 1px 4px rgba(0, 0, 0, .3);
}

.zoom-btn {
    display: flex;
    align-items: center;
    justify-content: center;
    height: 34px;
}

.zoom-line {
    height: 1px;
    margin: 0 6px;
    background: #e6e6e6;
}

.map-credit {
    position: absolute;
    right: 0;
    bottom: 0;
    display: flex;
    height: 17px;
    background: rgba(240, 245, 250, .72);
    color: #555;
    font-size: 12.5px;
    line-height: 17px;
}

.map-credit span {
    padding: 0 8px 0 6px;
}

.credit-terms {
    border-left: 1px solid #fff;
}

.weather-cards {
    display: flex;
    flex-direction: column;
    gap: 44px;
    margin-left: 92px;
}

.weather-card {
    box-sizing: border-box;
    width: 646px;
    height: 206px;
    padding: 25px 19px 0;
    background: #edf0f5;
    border: 1px solid #c4c6cb;
    color: #2e2e2e;
    font-family: "Liberation Sans", Arial, sans-serif;
    text-align: center;
}

.weather-card h2 {
    margin: 0;
    font-size: 45px;
    font-weight: normal;
    line-height: 50px;
}

.weather-card hr {
    height: 1px;
    margin: 24px 0 25px;
    border: 0;
    background: #f0f2f4;
}

.weather-card p {
    margin: 0;
    font-size: 37.5px;
    line-height: 40px;
}

/* scrollbars */
.vscroll {
    position: relative;
    flex: none;
    width: 17px;
    background: #f1f1f1;
}

.vthumb {
    position: absolute;
    top: 19px;
    left: 2px;
    width: 13px;
    height: 527px;
    background: #c1c1c1;
}

.arrow-up, .arrow-down {
    position: absolute;
    left: 4px;
    width: 0;
    height: 0;
    border-left: 4.5px solid transparent;
    border-right: 4.5px solid transparent;
}

.arrow-up {
    top: 7px;
    border-bottom: 4px solid #a3a3a3;
}

.arrow-down {
    bottom: 6px;
    border-top: 4px solid #505050;
}

.hscroll {
    position: relative;
    flex: none;
    height: 17px;
    background: #f1f1f1;
}

.hthumb {
    position: absolute;
    top: 2px;
    left: 17px;
    width: 1851px;
    height: 13px;
    background: #c1c1c1;
}

.arrow-left, .arrow-right {
    position: absolute;
    top: 4px;
    width: 0;
    height: 0;
    border-top: 4.5px solid transparent;
    border-bottom: 4.5px solid transparent;
}

.arrow-left {
    left: 6px;
    border-right: 4px solid #505050;
}

.arrow-right {
    left: 1893px;
    border-left: 4px solid #505050;
}

.scroll-corner {
    position: absolute;
    top: 0;
    right: 0;
    width: 17px;
    height: 17px;
    background: #dcdcdc;
}
```
